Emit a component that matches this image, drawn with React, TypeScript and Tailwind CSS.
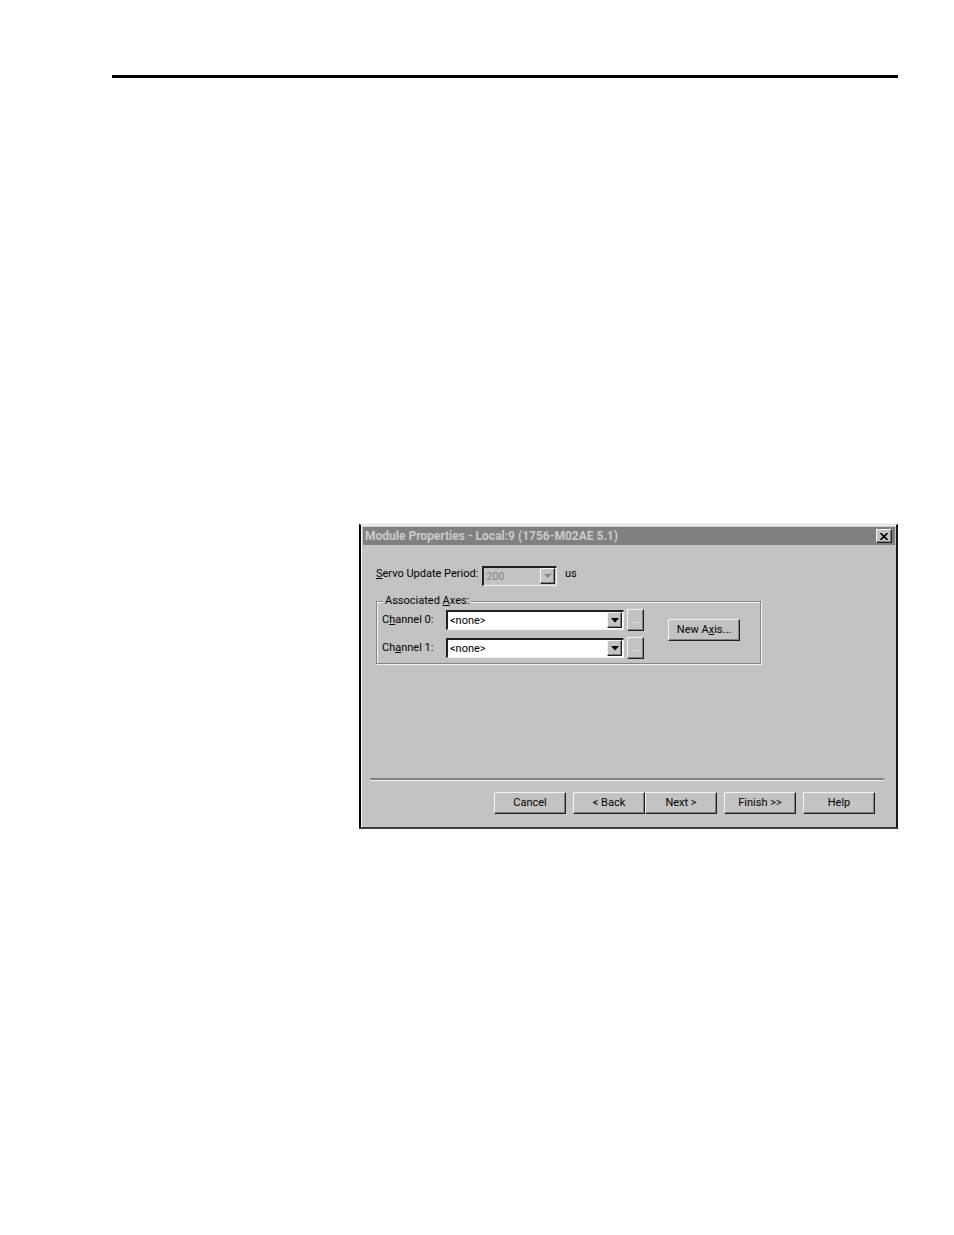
import type { ReactNode } from "react";

const raised =
  "bg-[#c3c3c3] border border-t-[#f4f4f4] border-l-[#f4f4f4] border-r-[#202020] border-b-[#202020] shadow-[inset_-1px_-1px_0_#808080]";

function Arrow({ disabled = false }: { disabled?: boolean }) {
  return (
    <span
      className={`pointer-events-none absolute top-[2px] right-[2px] bottom-[2px] flex w-[15px] items-center justify-center ${raised}`}
    >
      <svg width="8" height="5" viewBox="0 0 8 5" aria-hidden="true">
        {disabled && <path d="M1 1h7L4.5 5z" fill="#f4f4f4" />}
        <path d="M0 0h8L4 4.5z" fill={disabled ? "#858585" : "#000"} />
      </svg>
    </span>
  );
}

function Combo({
  id,
  options,
  disabled = false,
  className,
}: {
  id: string;
  options: string[];
  disabled?: boolean;
  className: string;
}) {
  return (
    <div className={`relative h-5 ${className}`}>
      <select
        id={id}
        disabled={disabled}
        className={`block h-full w-full appearance-none border-t-2 border-r border-b border-l-2 border-t-[#202020] border-r-[#f4f4f4] border-b-[#f4f4f4] border-l-[#202020] pr-4 pl-[2px] text-[11px] leading-4 opacity-100 ${
          disabled ? "bg-[#c3c3c3] text-[#858585]" : "bg-white text-black"
        }`}
      >
        {options.map((o) => (
          <option key={o}>{o}</option>
        ))}
      </select>
      <Arrow disabled={disabled} />
    </div>
  );
}

function PushButton({ children, className = "" }: { children: ReactNode; className?: string }) {
  return (
    <button
      type="button"
      className={`flex h-[22px] w-[72px] shrink-0 items-center justify-center text-[11px] leading-4 text-black ${raised} ${className}`}
    >
      <span>{children}</span>
    </button>
  );
}

function Channel({ id, label }: { id: string; label: ReactNode }) {
  return (
    <div className="flex h-[22px] items-center">
      <label htmlFor={id} className="w-16 shrink-0">
        {label}
      </label>
      <Combo id={id} options={["<none>"]} className="w-[178px]" />
      <button
        type="button"
        disabled
        aria-label="Configure axis"
        className={`ml-[3px] h-[22px] w-[17px] shrink-0 text-center text-[11px] leading-4 text-[#f4f4f4] ${raised}`}
      >
        ...
      </button>
    </div>
  );
}

export default function App() {
  return (
    <main className="min-h-screen bg-white pt-[75px] pr-14 pl-28 font-[Roboto,'Liberation_Sans',sans-serif] text-[11px] leading-4 text-black">
      <hr className="border-t-3 border-black" />
      <section
        aria-labelledby="dialog-title"
        className="mt-[446px] ml-[247px] border-x-2 border-t border-b-2 border-t-[#d4d4d4] border-r-[#181818] border-b-[#404040] border-l-black bg-[#c3c3c3]"
      >
        <div className="border-t border-l border-white pt-px pr-px pl-px">
          <header className="flex h-[18px] items-center justify-between bg-[#808080] pr-[3px] pl-[2px]">
            <h1 id="dialog-title" className="text-[12px] leading-4 font-bold text-[#cbcbcb]">
              Module Properties - Local:9 (1756-M02AE 5.1)
            </h1>
            <button
              type="button"
              aria-label="Close"
              className={`flex h-[14px] w-4 items-center justify-center ${raised}`}
            >
              <svg width="8" height="7" viewBox="0 0 8 7" aria-hidden="true">
                <path d="M.5 0 7.5 7M7.5 0 .5 7" stroke="#000" strokeWidth="1.6" />
              </svg>
            </button>
          </header>

          <form className="px-[11px] pt-[21px] pb-[13px]">
            <div className="ml-[2px] flex h-5 items-start">
              <label htmlFor="period" className="w-[106px]">
                <u>S</u>ervo Update Period:
              </label>
              <Combo id="period" options={["200"]} disabled className="w-[75px]" />
              <span className="ml-2">us</span>
            </div>

            <fieldset className="mt-[7px] ml-[2px] flex max-w-[385px] items-center justify-between border border-[#858585] pr-5 pb-[4px] pl-[5px] shadow-[1px_1px_0_#f4f4f4,inset_1px_1px_0_#f4f4f4]">
              <legend className="ml-[1px] bg-[#c3c3c3] px-[2px]">
                Associated <u>A</u>xes:
              </legend>
              <div className="flex flex-col gap-[6px]">
                <Channel
                  id="channel0"
                  label={
                    <>
                      C<u>h</u>annel 0:
                    </>
                  }
                />
                <Channel
                  id="channel1"
                  label={
                    <>
                      Ch<u>a</u>nnel 1:
                    </>
                  }
                />
              </div>
              <PushButton className="mb-2">
                New A<u>x</u>is...
              </PushButton>
            </fieldset>

            <hr className="mt-[114px] -ml-1 border-t-2 border-[#808080] shadow-[0_1px_0_#f4f4f4]" />

            <div className="mt-3 mr-[9px] flex justify-end gap-[7px]">
              <PushButton>Cancel</PushButton>
              <div className="flex">
                <PushButton>&lt; Back</PushButton>
                <PushButton>Next &gt;</PushButton>
              </div>
              <PushButton>Finish &gt;&gt;</PushButton>
              <PushButton>Help</PushButton>
            </div>
          </form>
        </div>
      </section>
    </main>
  );
}
